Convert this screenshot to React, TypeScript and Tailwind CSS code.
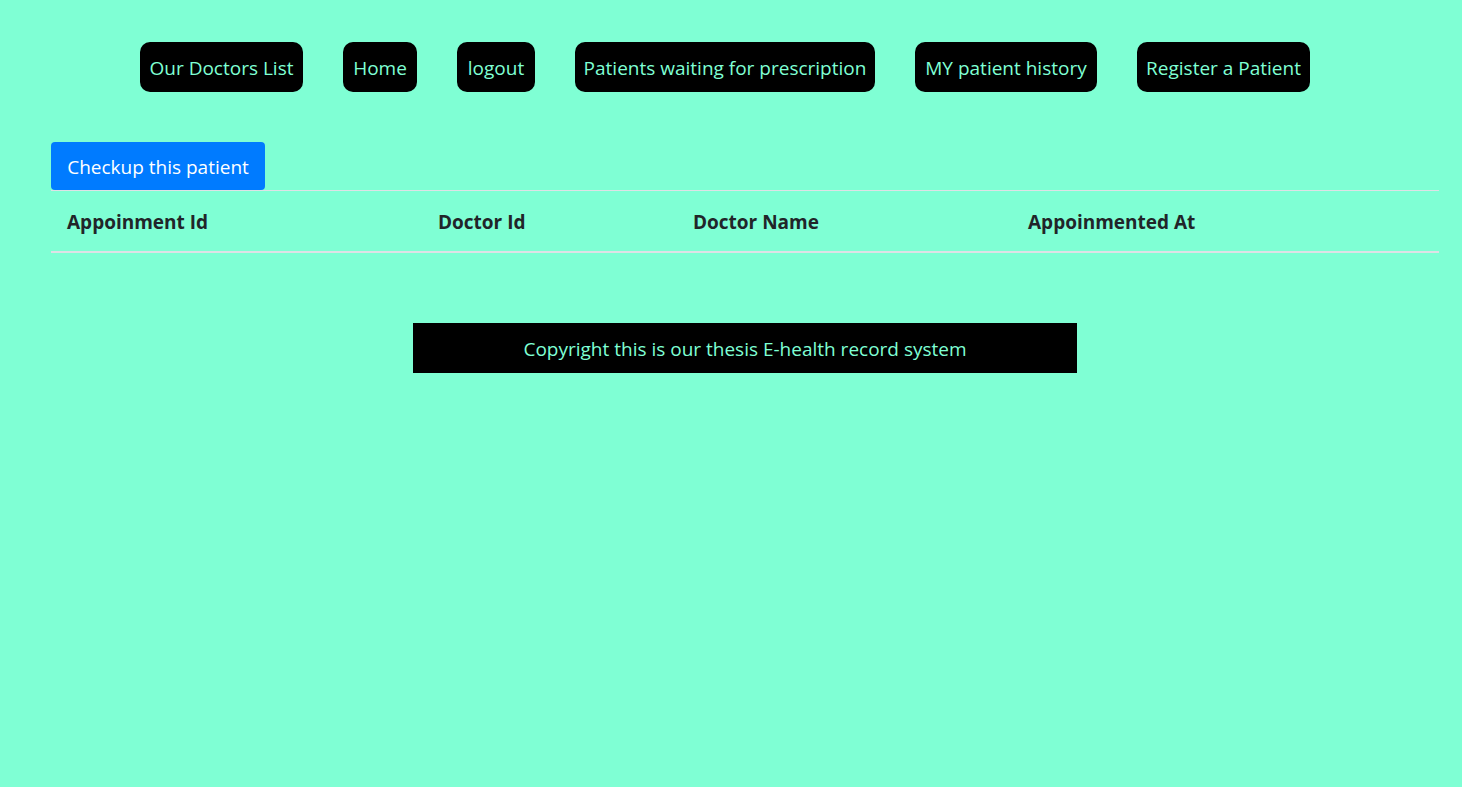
import React from "react";

const navItems = [
  { label: "Our Doctors List", w: "w-[163px]" },
  { label: "Home", w: "w-[74px]" },
  { label: "logout", w: "w-[78px]" },
  { label: "Patients waiting for prescription", w: "w-[300px]" },
  { label: "MY patient history", w: "w-[182px]" },
  { label: "Register a Patient", w: "w-[173px]" },
];

export default function App() {
  return (
    <div
      className="min-h-[787px] w-full bg-[#7fffd4]"
      style={{ fontFamily: '"Open Sans", "Noto Sans", sans-serif' }}
    >
      <nav className="flex justify-center gap-[40px] pt-[42px] pr-[12px]">
        {navItems.map((n) => (
          <a
            key={n.label}
            className={`${n.w} flex h-[50px] items-center justify-center whitespace-nowrap rounded-[10px] bg-black pt-[2px] text-[19px] text-[#7fffd4]`}
          >
            {n.label}
          </a>
        ))}
      </nav>

      <div className="mt-[50px] px-[51px] pr-[23px]">
        <button className="flex h-[48px] w-[214px] items-center justify-center rounded-[4px] bg-[#007bff] pt-[2px] text-[19px] text-white">
          Checkup this patient
        </button>
        <div className="grid h-[63px] grid-cols-[371px_255px_335px_1fr] items-center border-t border-b-2 border-[#dee2e6] pt-[2px] text-[19px] font-bold text-[#212529]">
          <div className="pl-[16px]">Appoinment Id</div>
          <div className="pl-[16px]">Doctor Id</div>
          <div className="pl-[16px]">Doctor Name</div>
          <div className="pl-[16px]">Appoinmented At</div>
        </div>
      </div>

      <footer className="ml-[413px] mt-[70px] flex h-[50px] w-[664px] items-center justify-center bg-black pt-[2px] text-[19px] text-[#7fffd4]">
        Copyright this is our thesis E-health record system
      </footer>
    </div>
  );
}
